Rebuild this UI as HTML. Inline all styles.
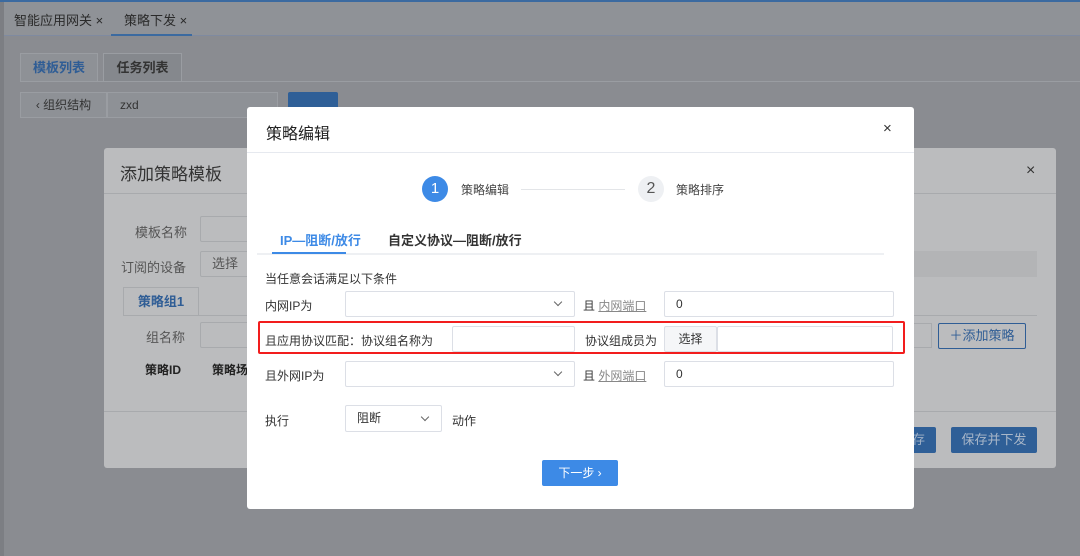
<!DOCTYPE html>
<html><head><meta charset="utf-8"><style>
*{margin:0;padding:0;box-sizing:border-box}
body{width:1080px;height:556px;overflow:hidden;position:relative;background:#898b90;font-family:"Liberation Sans","Noto Sans CJK SC",sans-serif;font-size:12px;color:#333}
.a{position:absolute;white-space:nowrap}
.inp{position:absolute;background:#fff;border:1px solid #dcdfe6;border-radius:2px;white-space:nowrap}
.chev{position:absolute;width:6px;height:6px;border-right:1px solid #666;border-bottom:1px solid #666;transform:rotate(45deg)}
.c{text-align:center;padding:0!important}
u{color:#888}
</style></head><body>
<div class="a" style="left:0;top:0;width:1080px;height:2px;background:#3b6aa0"></div>
<div class="a" style="left:0;top:2px;width:1080px;height:34px;background:#8f9297;border-bottom:1px solid #7f8aa0"></div>
<div class="a" style="left:0;top:2px;width:4px;height:554px;background:#7c7e83"></div>
<div class="a" style="left:14px;top:10px;font-size:13px;color:#2a2a2a">智能应用网关 ×</div>
<div class="a" style="left:124px;top:10px;font-size:13px;color:#2a2a2a">策略下发 ×</div>
<div class="a" style="left:111px;top:34px;width:81px;height:2px;background:#3b6aa0"></div>
<div class="a" style="left:10px;top:40px;width:1070px;height:516px;background:#8a8c91"></div>
<div class="a c" style="left:20px;top:53px;width:78px;height:29px;line-height:27px;background:#8e9196;border:1px solid #9a9da2;color:#2f5d95;font-weight:bold;font-size:13px">模板列表</div>
<div class="a c" style="left:103px;top:53px;width:79px;height:29px;line-height:27px;background:#85888d;border:1px solid #9a9da2;color:#333;font-weight:bold;font-size:13px">任务列表</div>
<div class="a" style="left:20px;top:81px;width:1060px;height:1px;background:#9a9da2"></div>
<div class="a c" style="left:20px;top:92px;width:87px;height:26px;line-height:24px;border:1px solid #9a9da2;background:#8e9196;color:#333">‹ 组织结构</div>
<div class="a" style="left:107px;top:92px;width:171px;height:26px;line-height:24px;border:1px solid #9a9da2;background:#8e9196;padding-left:12px;color:#333">zxd</div>
<div class="a" style="left:288px;top:92px;width:50px;height:26px;background:#2f5f97;border-radius:2px"></div>
<div class="a" style="left:20px;top:128px;width:1060px;height:428px;background:#8a8c91"></div>
<div class="a" style="left:104px;top:148px;width:952px;height:320px;background:#bbbcbe;border-radius:3px">
 <div class="a" style="left:16px;top:12px;font-size:17px;color:#333">添加策略模板</div>
 <div class="a" style="left:922px;top:14px;font-size:16px;color:#333">×</div>
 <div class="a" style="left:0;top:45px;width:952px;height:1px;background:#a8aaad"></div>
 <div class="a" style="left:31px;top:74px;font-size:13px;color:#555">模板名称</div>
 <div class="a" style="left:96px;top:68px;width:50px;height:26px;border:1px solid #a8aaad;border-radius:2px"></div>
 <div class="a" style="left:17px;top:109px;font-size:13px;color:#555">订阅的设备</div>
 <div class="a c" style="left:96px;top:103px;width:50px;height:26px;line-height:24px;border:1px solid #a8aaad;border-radius:2px;font-size:13px;color:#555">选择</div>
 <div class="a" style="left:810px;top:103px;width:123px;height:26px;background:#b3b4b6"></div>
 <div class="a c" style="left:19px;top:139px;width:76px;height:29px;line-height:27px;border:1px solid #a8aaad;border-bottom:none;color:#2f5d95;font-weight:bold;font-size:13px">策略组1</div>
 <div class="a" style="left:19px;top:167px;width:914px;height:1px;background:#a8aaad"></div>
 <div class="a" style="left:42px;top:179px;font-size:13px;color:#555">组名称</div>
 <div class="a" style="left:96px;top:174px;width:50px;height:26px;border:1px solid #a8aaad;border-radius:2px"></div>
 <div class="a" style="left:800px;top:175px;width:28px;height:25px;border:1px solid #a8aaad"></div>
 <div class="a c" style="left:834px;top:175px;width:88px;height:26px;line-height:24px;border:1px solid #2f5d95;border-radius:2px;color:#2f5d95;font-size:13px">＋添加策略</div>
 <div class="a" style="left:41px;top:213px;font-weight:bold;color:#222">策略ID</div>
 <div class="a" style="left:108px;top:213px;font-weight:bold;color:#222">策略场</div>
 <div class="a" style="left:0;top:263px;width:952px;height:1px;background:#a8aaad"></div>
 <div class="a" style="left:780px;top:279px;width:52px;height:26px;line-height:26px;background:#2f5f97;border-radius:2px;color:#9fb0c6;font-size:13px;padding-left:28px">存</div>
 <div class="a c" style="left:847px;top:279px;width:86px;height:26px;line-height:26px;background:#2f5f97;border-radius:2px;color:#a9b7c9;font-size:13px">保存并下发</div>
</div>
<div class="a" style="left:247px;top:107px;width:667px;height:402px;background:#fff;border-radius:3px">
 <div class="a" style="left:19px;top:13px;font-size:16px;color:#222">策略编辑</div>
 <div class="a" style="left:636px;top:13px;font-size:15px;color:#333">×</div>
 <div class="a" style="left:0;top:45px;width:667px;height:1px;background:#e6e9ef"></div>
 <div class="a" style="left:175px;top:69px;width:26px;height:26px;border-radius:50%;background:#3d8ae6;color:#fff;font-size:15px;text-align:center;line-height:26px">1</div>
 <div class="a" style="left:214px;top:74px;color:#444">策略编辑</div>
 <div class="a" style="left:274px;top:82px;width:104px;height:1px;background:#e3e5e8"></div>
 <div class="a" style="left:391px;top:69px;width:26px;height:26px;border-radius:50%;background:#eef0f3;color:#555;font-size:16px;text-align:center;line-height:26px">2</div>
 <div class="a" style="left:429px;top:74px;color:#444">策略排序</div>
 <div class="a" style="left:33px;top:123px;font-size:13px;color:#3d8ae6;font-weight:bold">IP—阻断/放行</div>
 <div class="a" style="left:141px;top:123px;font-size:13px;color:#333;font-weight:bold">自定义协议—阻断/放行</div>
 <div class="a" style="left:10px;top:146px;width:627px;height:2px;background:#eef0f3"></div>
 <div class="a" style="left:25px;top:145px;width:74px;height:2px;background:#3d8ae6"></div>
 <div class="a" style="left:18px;top:163px;color:#333">当任意会话满足以下条件</div>
 <div class="a" style="left:18px;top:190px;color:#333">内网IP为</div>
 <div class="inp" style="left:98px;top:184px;width:230px;height:26px"><div class="chev" style="left:209px;top:7px"></div></div>
 <div class="a" style="left:336px;top:190px;color:#333">且 <u>内网端口</u></div>
 <div class="inp" style="left:417px;top:184px;width:230px;height:26px;line-height:24px;padding-left:11px">0</div>
 <div class="a" style="left:11px;top:214px;width:647px;height:33px;border:2px solid #f21d1d;border-radius:2px"></div>
 <div class="a" style="left:18px;top:225px;color:#333">且应用协议匹配：协议组名称为</div>
 <div class="inp" style="left:205px;top:219px;width:123px;height:26px"></div>
 <div class="a" style="left:338px;top:225px;color:#333">协议组成员为</div>
 <div class="inp c" style="left:417px;top:219px;width:53px;height:26px;line-height:24px;background:#f5f6f8">选择</div>
 <div class="inp" style="left:470px;top:219px;width:176px;height:26px"></div>
 <div class="a" style="left:18px;top:260px;color:#333">且外网IP为</div>
 <div class="inp" style="left:98px;top:254px;width:230px;height:26px"><div class="chev" style="left:209px;top:7px"></div></div>
 <div class="a" style="left:336px;top:260px;color:#333">且 <u>外网端口</u></div>
 <div class="inp" style="left:417px;top:254px;width:230px;height:26px;line-height:24px;padding-left:11px">0</div>
 <div class="a" style="left:18px;top:305px;color:#333">执行</div>
 <div class="inp" style="left:98px;top:298px;width:97px;height:27px;line-height:25px;padding-left:11px">阻断<div class="chev" style="left:76px;top:8px"></div></div>
 <div class="a" style="left:205px;top:305px;color:#333">动作</div>
 <div class="a c" style="left:295px;top:353px;width:76px;height:26px;line-height:26px;background:#3d8ae6;border-radius:2px;color:#fff">下一步 ›</div>
</div>
</body></html>
